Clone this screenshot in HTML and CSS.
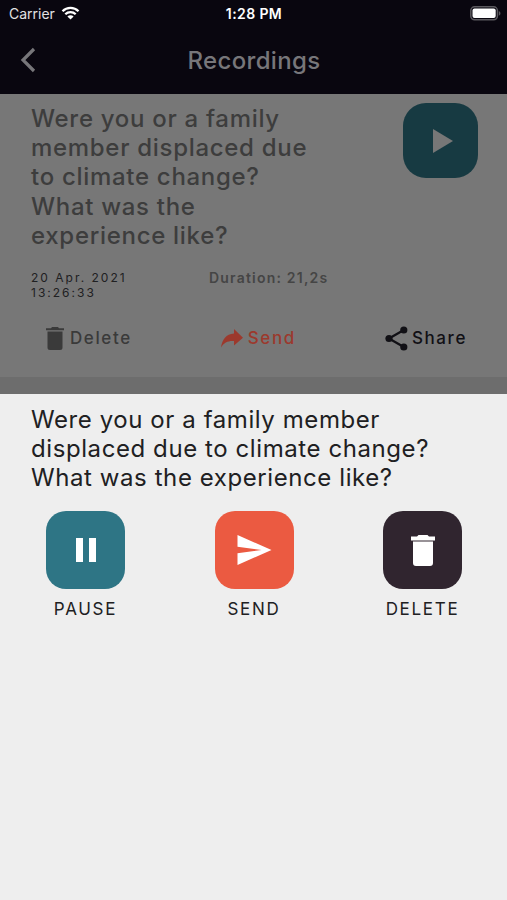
FILE: index.html
```html
<!DOCTYPE html>
<html lang="en">
<head>
  <meta charset="UTF-8">
  <meta name="viewport" content="width=device-width, initial-scale=1.0">
  <title>Recordings</title>
  <link rel="stylesheet" href="styles.css">
</head>
<body>
  <header>
    <div class="status-bar">
      <div class="carrier">
        <span>Carrier</span>
        <svg class="wifi" viewBox="0 0 18 14">
          <path d="M1 5.2a11.4 11.4 0 0 1 16 0M3.8 8.2a7.4 7.4 0 0 1 10.4 0" fill="none" stroke="#fff" stroke-width="2.3"/>
          <path d="M9 13.6 5.9 10.5a4.4 4.4 0 0 1 6.2 0z" fill="#fff"/>
        </svg>
      </div>
      <div class="clock">1:28 PM</div>
      <svg class="battery" viewBox="0 0 31 15">
        <rect x=".8" y=".8" width="26.6" height="13" rx="3.8" fill="none" stroke="#5b595e" stroke-width="1.5"/>
        <rect x="2.5" y="2.5" width="23.2" height="9.6" rx="2" fill="#fff"/>
        <path d="M28.8 5c2.2 1 2.2 3.8 0 4.8z" fill="#5b595e"/>
      </svg>
    </div>
    <nav class="nav-bar">
      <svg class="back" viewBox="0 0 16 26"><path d="M14 2 3 13l11 11" fill="none" stroke="#77767a" stroke-width="3.2"/></svg>
      <h1>Recordings</h1>
    </nav>
  </header>

  <main class="recording">
    <div class="recording-top">
      <h2>Were you or a family<br>member displaced due<br>to climate change?<br>What was the<br>experience like?</h2>
      <button class="play">
        <svg viewBox="0 0 20 24"><path d="M0 0 20 12 0 24z"/></svg>
      </button>
    </div>
    <div class="meta">
      <p class="date">20 Apr. 2021<br>13:26:33</p>
      <p class="duration">Duration: 21,2s</p>
    </div>
    <div class="links">
      <a class="link-delete">
        <svg width="18" height="23" viewBox="0 0 18 23"><path d="M0 1.3h5L6 0h6l1 1.3h5v2H0zM1.5 4.5h15v16a2.5 2.5 0 0 1-2.5 2.5H4a2.5 2.5 0 0 1-2.5-2.5z"/></svg>
        <span>Delete</span>
      </a>
      <a class="link-send">
        <svg width="22" height="19" viewBox="0 0 22 19"><path d="M13 0l9 8.7-9 7.800v-4.500C7 11.600 3 13.500 0 18.500 1.200 10.500 5 5.200 13 4.600z"/></svg>
        <span>Send</span>
      </a>
      <a class="link-share">
        <svg width="23" height="25" viewBox="0 0 23 25"><path d="M18.8 4 4 12.500 18.800 21" fill="none" stroke="currentColor" stroke-width="2.3"/><circle cx="18.8" cy="4" r="3.6"/><circle cx="4" cy="12.5" r="3.6"/><circle cx="18.8" cy="21" r="3.6"/></svg>
        <span>Share</span>
      </a>
    </div>
  </main>

  <!-- Bottom sheet -->
  <section class="sheet">
    <h2>Were you or a family member<br>displaced due to climate change?<br>What was the experience like?</h2>
    <div class="actions">
      <div class="action">
        <button class="pause">
          <svg width="20" height="24" viewBox="0 0 20 24"><path d="M0 0h7v24H0zM13 0h7v24h-7z"/></svg>
        </button>
        <span>PAUSE</span>
      </div>
      <div class="action">
        <button class="send">
          <svg width="35" height="30" viewBox="0 0 34 30"><path d="M0 0 34 15 0 30V18.3L24 15 0 11.7z"/></svg>
        </button>
        <span>SEND</span>
      </div>
      <div class="action">
        <button class="delete">
          <svg width="24" height="31" viewBox="0 0 24 31"><path d="M0 1.5h6L7.500 0h9L18 1.500h6v4H0zM2 6.600h20V28a3 3 0 0 1-3 3H5a3 3 0 0 1-3-3z"/></svg>
        </button>
        <span>DELETE</span>
      </div>
    </div>
  </section>
</body>
</html>
```

FILE: styles.css
```css
body, h1, h2, p, button {
  margin: 0;
  padding: 0;
  box-sizing: border-box;
}

body {
  font-family: Inter, "Liberation Sans", sans-serif;
  background-color: #eeeeee;
  color: #202022;
  height: 900px;
  overflow: hidden;
}

svg {
  display: block;
  fill: currentColor;
}

button {
  display: flex;
  align-items: center;
  justify-content: center;
  border: none;
  color: white;
}

/* Header */
header {
  height: 94px;
  background-color: #09060f;
  color: white;
}

.status-bar {
  display: grid;
  grid-template-columns: 1fr auto 1fr;
  align-items: center;
  height: 27px;
  padding: 0 6px 0 9px;
  font-size: 14px;
}

.carrier {
  display: flex;
  align-items: center;
  gap: 6px;
  color: #e2e1e3;
}

.wifi {
  width: 19px;
  height: 14px;
  margin-top: -2px;
}

.clock {
  font-size: 14px;
  font-weight: 600;
  letter-spacing: 0.4px;
  margin-right: 2px;
}

.battery {
  width: 31px;
  height: 15px;
  justify-self: end;
}

.nav-bar {
  display: grid;
  grid-template-columns: 1fr auto 1fr;
  align-items: center;
  height: 66px;
  padding: 0 19px 0 20px;
}

.back {
  width: 16px;
  height: 26px;
}

h1 {
  font-size: 24px;
  font-weight: 500;
  letter-spacing: 0.35px;
  color: #77767a;
}

/* Recording card, dimmed behind the sheet */
.recording {
  height: 300px;
  box-sizing: border-box;
  padding: 9px 29px 0 31px;
  background-color: #777777;
  border-bottom: 17px solid #6d6d6d;
}

h2 {
  font-size: 24px;
  line-height: 29.4px;
  font-weight: 500;
  letter-spacing: 0.7px;
  white-space: nowrap;
}

.recording-top {
  display: flex;
  justify-content: space-between;
  height: 167px;
}

.recording h2 {
  color: #3d3d3d;
  padding-top: 0.5px;
}

.play {
  width: 75px;
  height: 75px;
  border-radius: 23px;
  background-color: #173a42;
  color: #777777;
}

.play svg {
  width: 20px;
  height: 24px;
  margin-left: 4px;
}

.meta {
  display: grid;
  grid-template-columns: 178px 1fr;
  height: 49px;
}

.date {
  font-size: 12px;
  line-height: 15px;
  letter-spacing: 2px;
  color: #202022;
}

.duration {
  font-size: 14px;
  line-height: 16px;
  font-weight: 600;
  letter-spacing: 1.2px;
  color: #454545;
}

.links {
  display: flex;
  justify-content: space-between;
  padding: 0 11px 0 15px;
  height: 38px;
}

.links a {
  display: flex;
  align-items: center;
  gap: 5px;
  font-size: 17px;
  font-weight: 500;
  letter-spacing: 1.6px;
}

.links .link-delete {
  color: #3a3a3a;
  gap: 6px;
}

.link-send {
  color: #9c392d;
}

.links .link-share {
  color: #111015;
  gap: 4px;
}

/* Bottom sheet */
.sheet {
  padding: 10px 30px 0;
}

.sheet h2 {
  font-weight: 400;
  letter-spacing: 0.58px;
  padding: 0.5px 0 0 1px;
}

.actions {
  display: flex;
  justify-content: space-between;
  padding: 0 15px 0 16px;
  margin-top: 18.5px;
}

.action {
  display: flex;
  flex-direction: column;
  align-items: center;
  width: 79px;
  font-size: 17px;
  line-height: 20px;
  letter-spacing: 1.7px;
}

.action button {
  width: 79px;
  height: 78px;
  border-radius: 20px;
  margin-bottom: 10px;
}

.pause {
  background-color: #2e7585;
}

.send {
  background-color: #eb5a41;
}

.delete {
  background-color: #30252f;
}
```
